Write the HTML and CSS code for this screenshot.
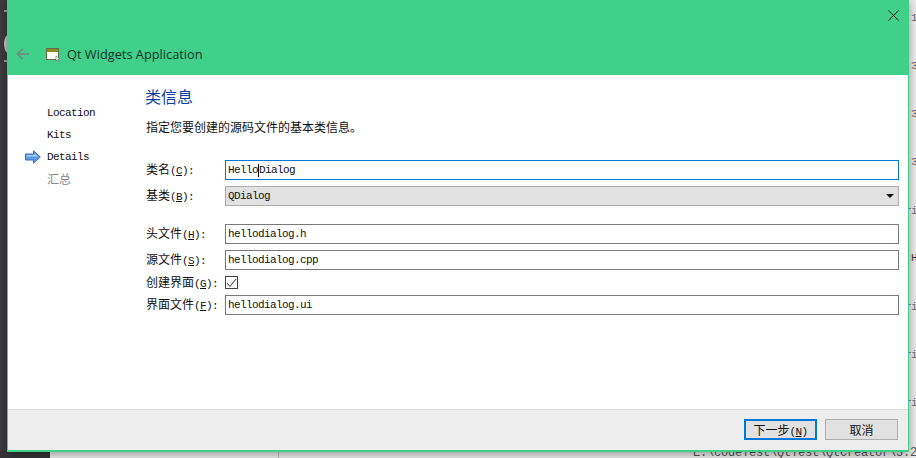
FILE: index.html
```html
<!DOCTYPE html>
<html lang="zh">
<head>
<meta charset="utf-8">
<title>Qt Widgets Application</title>
<link rel="stylesheet" href="styles.css">
</head>
<body>
<div class="desk">
  <div class="desk-left">
    <span class="blob"></span>
    <span class="tick tick-a"></span>
    <span class="tick tick-b"></span>
  </div>
  <div class="desk-corner"></div>
  <div class="desk-rule"></div>
  <span class="frag" style="top:12px">1</span>
  <span class="frag" style="top:60px">3</span>
  <span class="frag" style="top:108px">3</span>
  <span class="frag" style="top:156px">3</span>
  <span class="frag frag-wide" style="top:205px">ri</span>
  <span class="frag frag-dark" style="top:252px">H</span>
  <span class="frag frag-wide" style="top:301px">ri</span>
  <span class="frag frag-wide" style="top:349px">ri</span>
  <span class="frag frag-wide" style="top:397px">ri</span>
  <span class="path">E:\codeTest\QtTest\QtCreator\3.2</span>
</div>

<div class="wizard">
  <header class="head">
    <button class="close" aria-label="close">
      <svg width="11" height="11" viewBox="0 0 11 11"><path d="M.5.5l10 10M10.500.5l-10 10" stroke="#111" stroke-width="1" fill="none"/></svg>
    </button>
    <div class="head-row">
      <svg class="back" width="14" height="12" viewBox="0 0 14 12"><path d="M13 6H2M6.500 1L1.500 6l5 5" stroke="#6f8f80" stroke-width="1.800" fill="none"/></svg>
      <svg class="app" width="15" height="14" viewBox="0 0 15 14">
        <rect x=".5" y=".5" width="12" height="11" fill="#fdfdf5" stroke="#5d6f45"/>
        <rect x="1" y="1" width="11" height="3" fill="#8f8a22"/>
        <path d="M10 8l4 3-2 .4 1 2-1 .4-1-2-1 1z" fill="#fff" stroke="#555" stroke-width=".5"/>
      </svg>
      <span class="head-title">Qt Widgets Application</span>
    </div>
  </header>

  <div class="body">
    <nav class="steps">
      <div class="step"><span class="mark"></span><span class="lat">Location</span></div>
      <div class="step"><span class="mark"></span><span class="lat">Kits</span></div>
      <div class="step"><span class="mark">
        <svg width="16" height="14" viewBox="0 0 16 14"><path d="M.5 4H8.500V.8L15.300 7 8.500 13.200V10H.5z" fill="#5b9be6" stroke="#3a6fb5"/><path d="M1.500 5H9.500V3.500L13 6.500H1.500z" fill="#a9cdf5"/></svg>
      </span><span class="lat">Details</span></div>
      <div class="step step-off"><span class="mark"></span><span>汇总</span></div>
    </nav>

    <main class="main">
      <h1 class="title">类信息</h1>
      <p class="desc">指定您要创建的源码文件的基本类信息。</p>

      <div class="form form-top">
        <label class="lbl">类名<span class="lat">(<u>C</u>):</span></label>
        <div class="field field-focus"><span class="lat">Hello</span><i class="caret"></i><span class="lat">Dialog</span></div>
        <label class="lbl">基类<span class="lat">(<u>B</u>):</span></label>
        <div class="field field-combo"><span class="lat">QDialog</span><i class="drop"></i></div>
      </div>

      <div class="form form-bottom">
        <label class="lbl">头文件<span class="lat">(<u>H</u>):</span></label>
        <div class="field"><span class="lat">hellodialog.h</span></div>
        <label class="lbl">源文件<span class="lat">(<u>S</u>):</span></label>
        <div class="field"><span class="lat">hellodialog.cpp</span></div>
        <label class="lbl">创建界面<span class="lat">(<u>G</u>):</span></label>
        <div class="check-cell"><span class="check">
          <svg width="11" height="10" viewBox="0 0 11 10"><path d="M1 5l3 3.500L10 1" stroke="#333" stroke-width="1" fill="none"/></svg>
        </span></div>
        <label class="lbl">界面文件<span class="lat">(<u>F</u>):</span></label>
        <div class="field"><span class="lat">hellodialog.ui</span></div>
      </div>
    </main>
  </div>

  <footer class="foot">
    <button class="btn btn-primary">下一步<span class="lat">(<u>N</u>)</span></button>
    <button class="btn">取消</button>
  </footer>
</div>
</body>
</html>
```
FILE: styles.css
```css
* { box-sizing: border-box; }
html, body { margin: 0; padding: 0; width: 916px; height: 458px; overflow: hidden; }
body {
  position: relative;
  background: #fafafa;
  font-family: "Noto Sans CJK SC", "Liberation Sans", sans-serif;
  font-size: 12px;
  color: #111;
}
.desk { position: absolute; inset: 0; overflow: hidden; background: #ececec; }
.desk-left { position: absolute; left: 0; top: 0; width: 7px; height: 458px; background: #3b3b3d; }
.blob { position: absolute; left: 4px; top: 35px; width: 8px; height: 18px; border-radius: 50%; background: #c8c8c8; }
.tick { position: absolute; left: 4px; width: 3px; height: 2px; background: #a0a0a0; }
.tick-a { top: 10px; }
.tick-b { top: 60px; }
.desk-corner { position: absolute; left: 0; top: 451px; width: 50px; height: 7px; background: #333335; }
.desk-rule { position: absolute; left: 278px; top: 451px; width: 1px; height: 7px; background: #bbb; }
.frag {
  position: absolute; left: 911px;
  font-family: "Liberation Mono", monospace; font-size: 11px; line-height: 12px; letter-spacing: -.6px;
  color: #666;
}
.frag-wide { left: 905px; }
.frag-dark { color: #333; }
.path {
  position: absolute; left: 693px; top: 446px;
  font-family: "Liberation Mono", monospace; font-size: 12px; line-height: 14px; letter-spacing: -.2px;
  color: #555; white-space: nowrap;
}

.wizard {
  position: absolute; left: 7px; top: 0; width: 902px; height: 452px;
  display: flex; flex-direction: column;
  background: #fff;
  border-right: 1px solid #3fd088;
  border-bottom: 2px solid #3fd088;
  border-left: 1px solid #3fd088;
  box-shadow: 0 2px 9px rgba(0,0,0,.38);
}
.head { height: 75px; margin: 0 -1px; background: #41d089; position: relative; display: flex; align-items: flex-end; }
.close { position: absolute; right: 10px; top: 10px; width: 11px; height: 11px; padding: 0; border: 0; background: none; display: flex; }
.head-row { display: flex; align-items: center; height: 20px; margin-bottom: 11px; padding-left: 9px; }
.back { margin-right: 16px; }
.app { margin-right: 6px; margin-top: 1px; }
.head-title { font-family: "Open Sans", sans-serif; font-size: 12.800px; color: #17352a; }

.body { flex: 1; display: flex; min-height: 0; }
.steps { width: 137px; padding-top: 27px; flex: none; }
.step { height: 22px; display: flex; align-items: center; line-height: 22px; }
.step-off { color: #888; }
.mark { width: 39px; padding-left: 17px; display: flex; flex: none; }
.lat {
  font-family: "Liberation Mono", monospace; font-size: 11px; letter-spacing: -.6px;
}
u { text-underline-offset: 1px; }

.main { flex: 1; padding: 0 9px 0 1px; }
.title { margin: 0 0 0 -1px; padding-top: 8px; font-size: 16px; font-weight: 400; line-height: 26px; color: #0b3ea6; }
.desc { margin: 9px 0 0 0; font-size: 12px; line-height: 18px; }
.form { display: grid; grid-template-columns: 79px 1fr; align-items: center; row-gap: 6px; }
.form-top { margin-top: 24px; grid-template-rows: 20px 20px; }
.form-bottom { margin-top: 18px; grid-template-rows: 20px 20px 13px 20px; }
.lbl { line-height: 20px; white-space: nowrap; }
.field {
  height: 20px; border: 1px solid #7a7a7a; background: #fff; padding-left: 2px;
  display: flex; align-items: center; line-height: 18px; position: relative;
}
.field-focus { border-color: #0078d7; }
.field-combo { background: #e1e1e1; border-color: #adadad; }
.caret { display: block; width: 1px; height: 13px; background: #000; flex: none; }
.drop {
  position: absolute; right: 4px; top: 7px; width: 0; height: 0;
  border-left: 4px solid transparent; border-right: 4px solid transparent; border-top: 4px solid #111;
}
.check-cell { height: 13px; display: flex; align-items: center; }
.check { width: 13px; height: 13px; border: 1px solid #444; display: flex; align-items: center; justify-content: center; background: #fff; }

.foot {
  height: 41px; background: #eee; border-top: 1px solid #dcdcdc;
  display: flex; justify-content: flex-end; align-items: flex-start; gap: 8px;
  padding: 9px 10px 0 0;
}
.btn {
  width: 73px; height: 21px; padding: 0; border: 1px solid #adadad; background: #e1e1e1;
  font: inherit; color: #111; line-height: 17px;
}
.btn-primary { border: 2px solid #0078d7; }
```
